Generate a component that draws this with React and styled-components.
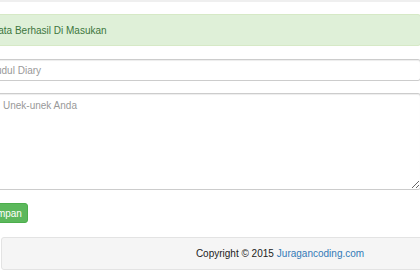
import styled, {createGlobalStyle} from 'styled-components'

const GlobalStyle = createGlobalStyle`
  html, body {
    margin: 0;
    padding: 0;
    overflow: hidden;
    background: #fff;
    font-family: "Liberation Sans", Arial, sans-serif;
    font-size: 10px;
    color: #333;
  }
`

export default function App() {
  return (
    <>
      <GlobalStyle />
      <Page>
        <TopStrip />
        <Main>
          <Alert>Data Berhasil Di Masukan</Alert>
          <Form onSubmit={e => e.preventDefault()}>
            <Input type='text' placeholder='Judul Diary' />
            <TextArea placeholder='Unek-unek Anda' />
            <Button type='submit'>Simpan</Button>
          </Form>
        </Main>
        <Footer>
          Copyright &copy; 2015 <FooterLink href='#'>Juragancoding.com</FooterLink>
        </Footer>
      </Page>
    </>
  )
}

const Page = styled.div`
  width: 420px;
  height: 280px;
  display: flex;
  flex-direction: column;
`

const TopStrip = styled.div`
  height: 2px;
  background: #efefef;
`

const Main = styled.div`
  margin-left: -18px;
  width: 439px;
  display: flex;
  flex-direction: column;
`

const Alert = styled.div`
  margin-top: 12px;
  height: 32px;
  box-sizing: border-box;
  display: flex;
  align-items: center;
  padding: 0 8px;
  background: #dff0d8;
  border: 1px solid #d6e9c6;
  border-radius: 3px;
  color: #3c763d;
  font-size: 10px;
`

const Form = styled.form`
  display: flex;
  flex-direction: column;
  align-items: flex-start;
  margin-top: 13px;
`

const fieldBase = `
  display: block;
  width: 100%;
  box-sizing: border-box;
  border: 1px solid #ccc;
  border-radius: 3px;
  box-shadow: inset 0 1px 1px rgba(0, 0, 0, 0.075);
  background: #fff;
  font-family: "Liberation Sans", Arial, sans-serif;
  font-size: 10px;
  color: #555;
  outline: none;
  &::placeholder {
    color: #999;
  }
`

const Input = styled.input`
  ${fieldBase}
  height: 22px;
  padding: 0 8px;
`

const TextArea = styled.textarea`
  ${fieldBase}
  margin-top: 12px;
  height: 97px;
  padding: 6px 8px 6px 20px;
  resize: vertical;
`

const Button = styled.button`
  margin-top: 13px;
  height: 20px;
  padding: 0 5px;
  background: #5cb85c;
  border: 1px solid #4cae4c;
  border-radius: 3px;
  color: #fff;
  font-family: "Liberation Sans", Arial, sans-serif;
  font-size: 10px;
  cursor: pointer;
`

const Footer = styled.div`
  margin: 14px 0 0 1px;
  width: 558px;
  height: 33px;
  box-sizing: border-box;
  display: flex;
  align-items: center;
  justify-content: center;
  gap: 3px;
  background: #f5f5f5;
  border: 1px solid #e3e3e3;
  border-radius: 3px;
  font-size: 10px;
  color: #222;
`

const FooterLink = styled.a`
  color: #337ab7;
  text-decoration: none;
`
